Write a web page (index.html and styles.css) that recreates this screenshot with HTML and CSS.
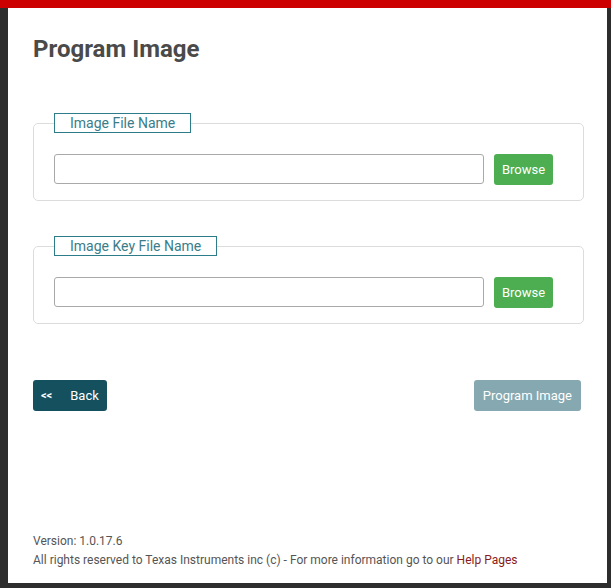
FILE: index.html
```html
<!DOCTYPE html>
<html lang="en">
<head>
<meta charset="utf-8">
<title>Program Image</title>
<link rel="stylesheet" href="styles.css">
</head>
<body>
<div class="topbar"></div>
<div class="frame">
  <main class="panel">
    <h1 class="title">Program Image</h1>
    <fieldset class="group">
      <legend class="group-label">Image File Name</legend>
      <div class="file-row">
        <input class="file-input" type="text">
        <button class="btn btn-browse" type="button">Browse</button>
      </div>
    </fieldset>
    <fieldset class="group group-second">
      <legend class="group-label">Image Key File Name</legend>
      <div class="file-row">
        <input class="file-input" type="text">
        <button class="btn btn-browse" type="button">Browse</button>
      </div>
    </fieldset>
    <div class="actions">
      <button class="btn btn-back" type="button"><span class="back-arrows">&lt;&lt;</span>Back</button>
      <button class="btn btn-program" type="button">Program Image</button>
    </div>
    <footer class="footer">
      <div class="footer-line">Version: 1.0.17.6</div>
      <div class="footer-line">All rights reserved to Texas Instruments inc (c) - For more information go to our <a class="help-link" href="#">Help Pages</a></div>
    </footer>
  </main>
</div>
</body>
</html>
```
FILE: styles.css
```css
html, body {
  margin: 0;
  height: 100%;
}

body {
  background: #2d2d2d;
  font-family: Roboto, "Liberation Sans", Arial, sans-serif;
  display: flex;
  flex-direction: column;
}

.topbar {
  height: 8px;
  background: #cc0000;
  flex-shrink: 0;
}

.frame {
  flex: 1;
  display: flex;
  padding: 0 4px 5px 8px;
  min-height: 0;
}

.panel {
  flex: 1;
  background: #ffffff;
  display: flex;
  flex-direction: column;
  padding: 0 23px 0 25px;
}

.title {
  margin: 27px 0 0 0;
  font-size: 24px;
  line-height: 28px;
  font-weight: 700;
  color: #4a4a4a;
}

.group {
  margin: 50px 0 0 0;
  border: 1px solid #dcdcdc;
  border-radius: 5px;
  padding: 21px 20px 15px 20px;
  min-width: 0;
}

.group-second {
  margin-top: 35px;
}

.group-label {
  margin: 0;
  padding: 0 15px;
  border: 1px solid #2c7d89;
  font-size: 14px;
  line-height: 18px;
  color: #3a7d89;
}

.file-row {
  display: flex;
  align-items: flex-start;
}

.file-input {
  box-sizing: border-box;
  width: 430px;
  height: 30px;
  margin: 0;
  border: 1px solid #a9a9a9;
  border-radius: 3px;
  padding: 0 8px;
  font-family: inherit;
  font-size: 13px;
}

.btn {
  border: none;
  margin: 0;
  height: 31px;
  border-radius: 3px;
  color: #ffffff;
  font-family: Roboto, "Liberation Sans", Arial, sans-serif;
  font-size: 13px;
  cursor: pointer;
}

.btn-browse {
  margin-left: 10px;
  width: 59px;
  padding: 0;
  background: #4cae50;
}

.actions {
  margin-top: 56px;
  display: flex;
  justify-content: space-between;
  padding-right: 3px;
}

.btn-back {
  background: #15505e;
  padding: 0 8px;
  display: flex;
  align-items: center;
}

.back-arrows {
  font-size: 11px;
  font-weight: 700;
  margin-right: 18px;
}

.btn-program {
  background: #86a8b0;
  padding: 0 9px;
}

.footer {
  margin-top: auto;
  padding-bottom: 13px;
  font-size: 12px;
  line-height: 19px;
  color: #555555;
}

.help-link {
  color: #8b1a1a;
  text-decoration: none;
}
```
